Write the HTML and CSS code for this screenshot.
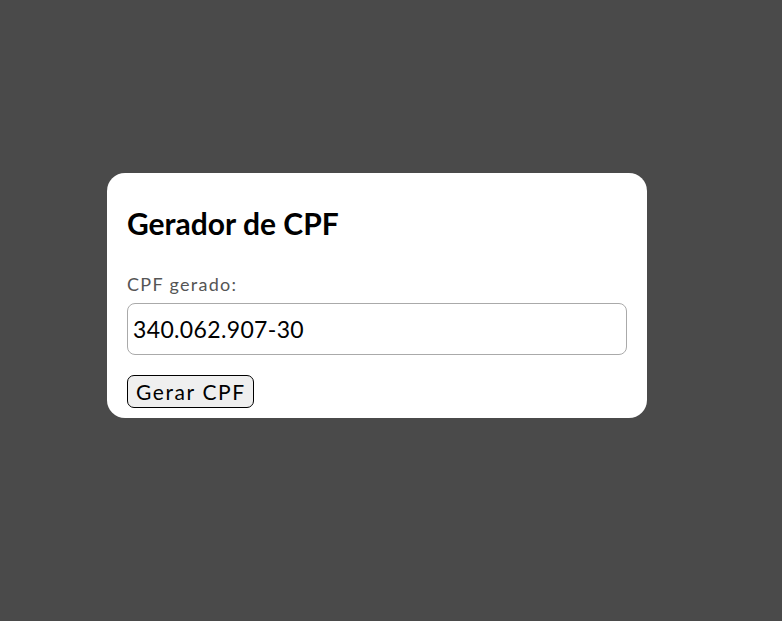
FILE: index.html
```html
<!DOCTYPE html>
<html lang="pt-BR">
<head>
<meta charset="utf-8">
<title>Gerador de CPF</title>
<link rel="stylesheet" href="styles.css">
</head>
<body>
<div class="card">
  <h1 class="title">Gerador de CPF</h1>
  <label class="label" for="cpf">CPF gerado:</label>
  <input class="field" id="cpf" type="text" value="340.062.907-30" readonly>
  <button class="btn" type="button">Gerar CPF</button>
</div>
</body>
</html>
```

FILE: styles.css
```css
html, body {
  margin: 0;
  height: 100%;
}
body {
  background: #4a4a4a;
  font-family: "Lato", "Noto Sans", sans-serif;
  padding: 173px 0 0 107px;
  box-sizing: border-box;
}
.card {
  width: 500px;
  background: #fff;
  border-radius: 18px;
  padding: 30px 20px 10px;
  display: flex;
  flex-direction: column;
  align-items: flex-start;
}
.title {
  margin: 0 0 30px;
  font-size: 30px;
  line-height: 40px;
  font-weight: 700;
  color: #000;
}
.label {
  font-size: 18px;
  line-height: 22px;
  letter-spacing: 1.3px;
  color: #555;
  margin-bottom: 8px;
}
.field {
  width: 100%;
  box-sizing: border-box;
  height: 52px;
  border: 1px solid #aaa;
  border-radius: 8px;
  padding: 0 5px;
  font-family: inherit;
  font-size: 23px;
  letter-spacing: 0.35px;
  color: #000;
  margin: 0 0 20px;
  outline: none;
}
.btn {
  font-family: inherit;
  font-size: 21px;
  line-height: 27px;
  letter-spacing: 1.6px;
  padding: 1px 7px 1px 8px;
  height: 33px;
  background: #efefef;
  border: 1px solid #000;
  border-radius: 7px;
  color: #000;
}
```
